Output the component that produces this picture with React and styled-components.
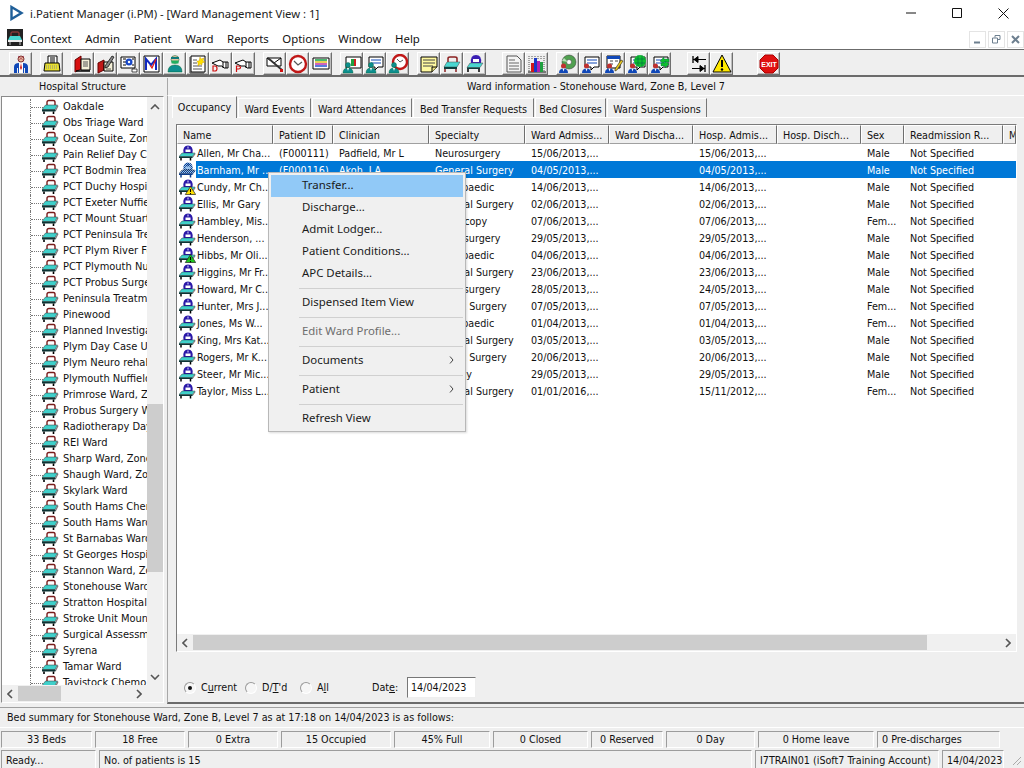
import React from 'react';
import styled, { createGlobalStyle } from 'styled-components';

const Global = createGlobalStyle`
  html, body { margin: 0; padding: 0; background: #fff; overflow: hidden; }
  * { box-sizing: border-box; }
`;
const UI = `"DejaVu Sans Condensed", "DejaVu Sans", sans-serif`;
const SEGOE = `"Noto Sans", "Open Sans", sans-serif`;

const Screen = styled.div`
  width: 1024px; height: 768px; display: flex; flex-direction: column; overflow: hidden; position: relative;
  background: #efefef; font-family: ${UI}; font-size: 10.7px; font-stretch: condensed; color: #000;
`;
const TitleBar = styled.div`
  height: 26px; background: #fff; display: flex; align-items: center; padding-left: 9px;
  font-family: ${SEGOE}; font-stretch: normal; font-size: 11.3px; color: #222;
`;
const TitleText = styled.span` margin-left: 6px; flex: 1; `;
const WinButton = styled.div` width: 46px; display: flex; justify-content: center; padding-left: 4px; `;
const MenuBar = styled.div`
  height: 23px; background: #fff; display: flex; align-items: center; padding-left: 7px;
  font-family: ${SEGOE}; font-stretch: normal; font-size: 11.4px; color: #111;
`;
const MenuItems = styled.div` display: flex; flex: 1; margin-left: 7px; padding-top: 1px; gap: 13.6px; `;
const MdiGroup = styled.div` display: flex; gap: 2px; margin-top: 4px; `;
const MdiButton = styled.div`
  width: 17px; height: 17px; border: 1px solid #e4e4e4; display: flex; align-items: center; justify-content: center;
`;
const Toolbar = styled.div`
  height: 28px; border-top: 1px solid #6b6b6b; border-bottom: 2px solid #6b6b6b; background: #efefef;
  display: flex; align-items: flex-start; padding: 2px 0 0 9px;
`;
const ToolGroup = styled.div` display: flex; margin-right: ${p => p.$gap}px; `;
const ToolButton = styled.div`
  width: 23px; height: 23px; display: flex; align-items: center; justify-content: center;
  border-top: 1px solid #fff; border-left: 1px solid #fff; border-right: 1px solid #6f6f6f; border-bottom: 1px solid #6f6f6f;
  box-shadow: inset -1px -1px 0 #bdbdbd;
`;
const Headers = styled.div` height: 19px; display: flex; padding-top: 1px; `;
const LeftHead = styled.div`
  width: 163px; margin-left: 1px; height: 17px; line-height: 18px; text-align: center; color: #111;
`;
const RightHead = styled.div`
  flex: 1; margin-left: 3px; height: 18px; line-height: 17px; text-align: center; border-left: 1px solid #a8a8a8;
  border-bottom: 1px solid #fff; color: #111;
`;
const Main = styled.div` height: 608px; display: flex; `;
const LeftPane = styled.div` width: 163px; margin-left: 1px; height: 607px; display: flex; flex-direction: column;
  border-top: 1px solid #8a8a8a; border-left: 1px solid #8a8a8a; border-right: 1px solid #fff; border-bottom: 1px solid #fff; background: #fff; `;
const LeftTop = styled.div` flex: 1; display: flex; min-height: 0; `;
const Tree = styled.div` width: 145px; overflow: hidden; padding-top: 2px; position: relative; font-size: 11px; `;
const TreeRow = styled.div`
  height: 16px; display: flex; align-items: center; white-space: nowrap; padding-left: 28px; position: relative; color: #111; line-height: 16px;
  &::before { content: ""; position: absolute; left: 28px; top: 0; bottom: 0; border-left: 1px dotted #777; }
  &::after { content: ""; position: absolute; left: 29px; top: 8px; width: 12px; border-top: 1px dotted #777; }
`;
const TreeIcon = styled.span` margin-left: 12px; margin-right: 4px; width: 17px; height: 16px; display: inline-flex; flex: none; `;
const VScroll = styled.div` width: 16px; background: #f0f0f0; display: flex; flex-direction: column; align-items: center; `;
const ScrollEnd = styled.div` height: ${p => p.$h || 17}px; width: ${p => p.$w || 16}px; display: flex; align-items: center; justify-content: center; flex: none; `;
const VThumbGap = styled.div` flex: none; height: ${p => p.$h}px; `;
const VThumb = styled.div` width: 16px; height: ${p => p.$h}px; background: #cdcdcd; flex: none; `;
const HScroll = styled.div` height: 17px; flex: none; background: #f0f0f0; display: flex; align-items: center; `;
const HThumb = styled.div` height: 15px; width: ${p => p.$w}px; background: #cdcdcd; flex: none; margin-left: ${p => p.$m || 0}px; `;
const Spacer = styled.div` flex: 1; `;
const RightPane = styled.div`
  width: 857px; margin-left: 3px; height: 608px; border-left: 1px solid #a8a8a8; border-bottom: 2px solid #6b6b6b;
  display: flex; flex-direction: column; padding-left: 4px;
`;
const Tabs = styled.div` display: flex; height: 22px; align-items: flex-end; border-bottom: 1px solid #fff; gap: 1px; `;
const Tab = styled.div`
  height: ${p => p.$active ? 22 : 19}px; width: ${p => p.$w}px; text-align: center; line-height: 22px; color: #111;
  border-top: 1px solid #fff; border-left: 1px solid #fff; border-right: 1px solid #777; white-space: nowrap;
  background: #efefef; ${p => p.$active ? 'margin-bottom: -1px; position: relative;' : ''}
`;
const ListBox = styled.div`
  width: 841px; height: 529px; margin: 6px 0 0 4px; display: flex; flex-direction: column; background: #fff;
  border-top: 1px solid #7a7a7a; border-left: 1px solid #7a7a7a; border-right: 1px solid #fff; border-bottom: 1px solid #fff;
`;
const Columns = `96px 60px 96px 96px 84px 84px 84px 84px 43px 99px 13px`;
const HeadRow = styled.div` display: grid; grid-template-columns: ${Columns}; height: 19px; background: #efefef; flex: none; `;
const HeadCell = styled.div`
  padding-left: 5px; line-height: 19px; color: #111; white-space: nowrap; overflow: hidden;
  border-top: 1px solid #fff; border-left: 1px solid #fff; border-right: 1px solid #6e6e6e; border-bottom: 1px solid #a0a0a0;
`;
const Rows = styled.div` flex: 1; min-height: 0; `;
const Row = styled.div` display: grid; grid-template-columns: ${Columns}; height: 17px; `;
const NameCell = styled.div` display: flex; align-items: center; padding-left: 2px; `;
const NameIcon = styled.span` width: 17px; height: 16px; flex: none; display: inline-flex; `;
const Label = styled.span`
  flex: 1; height: 17px; line-height: 19px; padding-left: 1px; white-space: nowrap; overflow: hidden;
  color: ${p => p.$sel ? '#fff' : '#111'}; background: ${p => p.$sel ? '#0078d7' : 'transparent'};
`;
const Cell = styled.div`
  padding-left: 6px; line-height: 19px; white-space: nowrap; overflow: hidden;
  color: ${p => p.$sel ? '#fff' : '#111'}; background: ${p => p.$sel ? '#0078d7' : 'transparent'};
`;
const FilterRow = styled.div` height: 50px; display: flex; align-items: center; padding: 21px 0 0 12px; color: #111; `;
const Radio = styled.span`
  width: 12px; height: 12px; border-radius: 50%; flex: none; margin-right: 5px; display: inline-flex; align-items: center; justify-content: center;
  border: 1px solid #9a9a9a; border-right-color: #fff; border-bottom-color: #fff; background: #f6f6f6;
  ${p => p.$on ? `&::after { content: ""; width: 4px; height: 4px; border-radius: 50%; background: #111; }` : ''}
`;
const RadioLabel = styled.span` width: ${p => p.$w}px; flex: none; `;
const DateLabel = styled.span` width: 28px; flex: none; `;
const DateInput = styled.div`
  width: 69px; height: 21px; margin-left: 7px; background: #fff; line-height: 19px; padding-left: 3px;
  border-top: 1px solid #777; border-left: 1px solid #777; border-right: 1px solid #eee; border-bottom: 1px solid #eee;
`;
const SummaryBar = styled.div`
  height: 21px; margin-top: 3px; border-top: 1px solid #a0a0a0; border-bottom: 1px solid #fff; padding-left: 7px; line-height: 20px; color: #111;
`;
const StatRow = styled.div` height: 20px; display: flex; padding: 3px 0 0 1px; gap: 3px; `;
const Sunken = styled.div`
  width: ${p => p.$w}px; height: 17px; line-height: 15px; text-align: ${p => p.$left ? 'left' : 'center'}; padding-left: ${p => p.$left ? 4 : 0}px;
  white-space: nowrap; overflow: hidden; color: #111; flex: none;
  border-top: 1px solid #9c9c9c; border-left: 1px solid #9c9c9c; border-right: 1px solid #fff; border-bottom: 1px solid #fff;
`;
const StatusRow = styled.div` height: 19px; display: flex; padding: 2px 0 0 1px; gap: 3px; position: relative; `;
const StatusCell = styled(Sunken)` height: 19px; line-height: 19px; `;
const Grip = styled.div` position: absolute; right: 2px; bottom: 1px; display: flex; `;

const ContextMenu = styled.div`
  position: absolute; left: 268px; top: 172px; width: 198px; height: 260px; background: #f0f0f0; padding: 2px;
  border: 1px solid #b8b8b8; box-shadow: 1px 1px 2px rgba(0,0,0,0.15);
  font-family: ${SEGOE}; font-stretch: normal; font-size: 11.4px; color: #1a1a1a;
`;
const MenuRow = styled.div`
  height: 22px; line-height: 20px; padding-left: 31px; position: relative;
  background: ${p => p.$hot ? '#91c9f7' : 'transparent'}; color: ${p => p.$off ? '#6d6d6d' : '#1a1a1a'};
`;
const Arrow = styled.span` position: absolute; right: 9px; top: 6px; display: flex; `;
const Sep = styled.div` height: 7px; padding: 3px 0 0 28px; &::after { content: ""; display: block; border-top: 1px solid #d0d0d0; } `;
const U = styled.span` text-decoration: underline; `;

const K = '#000';
const Bed = () => (
  <svg width="17" height="16" viewBox="0 0 17 16">
    <path d="M5 6.500V3.500Q5 1.500 7 1.500h4.500q1.500 0 1.500 2V6.500" fill="none" stroke="#7a1c1c" strokeWidth="1.400" />
    <path d="M3.500 6h12l-2.500 4.500H0z" fill="#3fd0ca" stroke="#333" strokeWidth=".5" />
    <path d="M15.500 6l1 1-2.500 5H13z" fill="#777" />
    <path d="M0 10.500h13.500v2H0z" fill="#0c3434" />
    <path d="M2 12.500v2.500M11.500 12.500v2.500" stroke={K} strokeWidth="1.600" />
  </svg>
);
const PatientBed = ({ kind, id }) => {
  const sel = kind === 'sel';
  return (
    <svg width="17" height="16" viewBox="0 0 17 16">
      <defs>
        <pattern id={id} width="2" height="2" patternUnits="userSpaceOnUse">
          <rect width="2" height="2" fill="#9cc4ec" /><rect width="1" height="1" fill="#0a3c8c" /><rect x="1" y="1" width="1" height="1" fill="#0a3c8c" />
        </pattern>
      </defs>
      <path d="M4.500 8Q3.500 .5 9 .5T13.500 8z" fill={sel ? `url(#${id})` : '#2a18a8'} />
      <rect x="6.500" y="4.500" width="5" height="2.500" fill={sel ? '#9cc4ec' : '#fff'} />
      <path d="M8.500 1.500h1v2h-1z" fill={sel ? '#0a3c8c' : '#e8e8ff'} />
      <path d="M3 8h13l-2.500 3.500H0z" fill={sel ? `url(#${id})` : '#3fd0ca'} stroke="#222" strokeWidth=".4" />
      <path d="M16 8l.5 1-2.500 3.500h-1z" fill={sel ? `url(#${id})` : '#777'} />
      <path d="M0 11.500h13.500v1.500H0z" fill={sel ? '#0a3c8c' : '#0c3434'} />
      <path d="M2 13v2.500M11.500 13v2.500" stroke={sel ? '#0a3c8c' : K} strokeWidth="1.500" />
      {(kind === 'warn' || kind === 'ok') && (
        <g>
          <path d="M11.500 7.500l5.200 8h-10.400z" fill={kind === 'warn' ? '#ffe000' : '#1ec81e'} stroke="#222" strokeWidth=".7" />
          <path d="M11.500 10v3M11.500 14v1" stroke={K} strokeWidth="1.100" />
        </g>
      )}
    </svg>
  );
};
const S = ({ children }) => <svg width="20" height="20" viewBox="0 0 20 20">{children}</svg>;
const Fig = () => (
  <g>
    <circle cx="6" cy="11" r="2.500" fill="#0e8f8f" stroke="#063" strokeWidth=".4" />
    <path d="M1 19q0-5 5-5t5 5z" fill="#0e8f8f" stroke="#063" strokeWidth=".4" />
    <path d="M5 14l1 3 1-3z" fill="#fff" />
  </g>
);
const FigBlue = () => (
  <g>
    <circle cx="5.500" cy="12" r="2.500" fill="#c03030" />
    <path d="M1 19q0-4.500 4.500-4.500T10 19z" fill="#1048b8" />
    <path d="M4.500 14.500h2l-1 3z" fill="#fff" />
  </g>
);
const Form = () => (
  <g>
    <path d="M4 3h14v10l-5 0-3 3V13H4z" fill="#fff" stroke={K} />
    <path d="M6 6h10M6 9h10" stroke="#1048b8" strokeWidth="1.200" />
  </g>
);
const ToolIcons = [
  [<S key="0"><circle cx="10" cy="5" r="3" fill="#e8c0a0" stroke="#803030" /><path d="M3 19V13q0-4 5-4h4q5 0 5 4v6h-3v-5h-1v5H7v-5H6v5z" fill="#1048b8" /><path d="M8 9h4v10H8z" fill="#fff" /><path d="M10 9l1 5-1 2-1-2z" fill="#d02020" /><path d="M7 2l6 5M13 2l-6 5" stroke="#a02040" strokeWidth=".6" /></S>],
  [<S key="1"><path d="M6 2h9v8H6z" fill="#fff" stroke={K} /><path d="M8 4h5M8 6h5M8 8h5" stroke={K} /><path d="M3 9h14l1 8H2z" fill="#e8e030" stroke={K} /><path d="M4 12h12M4 14h12" stroke="#888" strokeDasharray="1 1" /></S>],
  [
    <S key="2"><path d="M2 6l6-4v13l-6 3z" fill="#d81010" stroke="#600" /><path d="M8 5h9v11H8z" fill="#f4f0d8" stroke={K} /><path d="M10 8h5M10 10h5M10 12h5" stroke="#555" /><path d="M3 17h14" stroke={K} strokeWidth="1.500" /></S>,
    <S key="3"><path d="M2 9l6-3v10l-6 3z" fill="#c01818" stroke="#600" /><path d="M8 8h9v9H8z" fill="#f4f0d8" stroke={K} /><path d="M9 12L16 2l2 1-6 10-3 1z" fill="#888" stroke={K} strokeWidth=".7" /><path d="M10 15h5" stroke="#555" /></S>,
    <S key="4"><path d="M2 3h14v11H2z" fill="#fff" stroke={K} /><path d="M4 5h3M4 8h3M4 11h3M13 5h2M13 11h2" stroke={K} /><circle cx="10" cy="8" r="3.500" fill="#1848c8" /><circle cx="10" cy="8" r="1.200" fill="#fff" /><path d="M13 15h5v3h-5z" fill="#fff" stroke={K} strokeWidth=".7" /></S>,
    <S key="5"><path d="M2 2h15v16H2z" fill="#fff" stroke={K} /><path d="M4 16V5l5 6 5-6v11" fill="none" stroke="#1028c0" strokeWidth="2" /><path d="M8 11l2 3 4-9" fill="none" stroke="#e01818" strokeWidth="1.300" /></S>,
    <S key="6"><circle cx="10" cy="5.500" r="4" fill="#e8c0a0" stroke="#063" strokeWidth=".5" /><path d="M6 3h8v2H6z" fill="#0e7a7a" /><path d="M6.500 6.500h7v3h-7z" fill="#20b060" /><path d="M3 18q0-7 7-7t7 7z" fill="#0e8f8f" stroke="#063" strokeWidth=".5" /></S>,
    <S key="7"><path d="M3 2h14v16H3z" fill="#fff" stroke={K} /><path d="M2 3v16h14" fill="none" stroke="#333" /><path d="M5 6h4M5 9h4M5 12h9M5 15h9" stroke="#555" /><path d="M12 3l1 2 3-1-1 3 2 1-3 1v2l-2-1-2 2V9L9 7h2z" fill="#ffe000" stroke="#c09000" strokeWidth=".4" /></S>,
    <S key="8"><path d="M1 9l8-3 3 2h5v6h-4l-2-2H7z" fill="#fff" stroke={K} /><path d="M12 8v6M15 8v6" stroke={K} /><path d="M2 12v5h2q2 0 2-2.500T4 12z" fill="none" stroke="#d01010" strokeWidth="1.200" /></S>,
    <S key="9"><path d="M1 9l8-3 3 2h5v6h-4l-2-2H7z" fill="#fff" stroke={K} /><path d="M12 8v6M15 8v6" stroke={K} /><path d="M2.500 18v-6h2q2 0 2 1.500T4.500 15h-2" fill="none" stroke="#d01010" strokeWidth="1.200" /></S>,
  ],
  [
    <S key="10"><path d="M2 4h14v8H2z" fill="#fff" stroke={K} /><path d="M2 4l7 5 7-5" fill="none" stroke={K} /><path d="M3 4l14 12" stroke="#333" strokeWidth="1.800" /><path d="M15 15h3v3h-3z" fill="#d01010" /></S>,
    <S key="11"><circle cx="10" cy="10" r="8" fill="#fff" stroke="#c01818" strokeWidth="2.400" /><path d="M6 7l4 4 4-3" fill="none" stroke="#555" strokeWidth="1.200" /></S>,
    <S key="12"><path d="M2 4h16v11H2z" fill="#fff" stroke={K} /><path d="M4 6h12" stroke="#10a040" strokeWidth="1.500" /><path d="M4 8h12" stroke="#e0c020" strokeWidth="1.500" /><path d="M4 10h12" stroke="#c030a0" strokeWidth="1.500" /><path d="M4 12h12" stroke="#2050d0" strokeWidth="1.500" /></S>,
  ],
  [
    <S key="13"><path d="M4 3h15v11H4z" fill="#fff" stroke={K} /><path d="M12 5h2v7h-2z" fill="#d02020" /><path d="M9 5h3v7H9z" fill="#20a040" /><Fig /></S>,
    <S key="14"><Form /><Fig /></S>,
    <S key="15"><circle cx="12" cy="8" r="7" fill="#fff" stroke="#c01818" strokeWidth="2.400" /><path d="M9 5l3 3 3-2" fill="none" stroke="#555" /><Fig /></S>,
  ],
  [
    <S key="16"><path d="M2 3h16v10l-5 5H2z" fill="#fff9a0" stroke={K} /><path d="M4 6h12M4 9h12M4 12h10" stroke="#444" /><path d="M13 18v-5h5" fill="#e8e080" stroke={K} /></S>,
    <S key="17"><path d="M6 8V4.500Q6 3 8 3h5q2 0 2 1.500V8" fill="none" stroke="#8a2020" strokeWidth="1.500" /><path d="M5 8h13l-3 5H2z" fill="#49d6d0" stroke="#444" strokeWidth=".5" /><path d="M2 13h13v2H2z" fill="#0e3d3d" /><path d="M3 15v3M14 15v3" stroke="#8a2020" strokeWidth="1.500" /></S>,
    <S key="18"><path d="M6 9Q5 1 11 1q6 0 5 8z" fill="#3b1fb4" /><path d="M8 5h6v3H8z" fill="#fff" /><path d="M5 9h13l-3 4.500H2z" fill="#49d6d0" stroke="#444" strokeWidth=".5" /><path d="M2 13.500h13V15H2z" fill="#0e3d3d" /><path d="M3 15v3M14 15v3" stroke={K} strokeWidth="1.500" /></S>,
  ],
  [
    <S key="19"><path d="M3 2h10l4 4v12H3z" fill="#f4f4f4" stroke="#555" /><path d="M5 6h6M5 9h10M5 12h10M5 15h10" stroke="#666" /></S>,
    <S key="20"><path d="M1 18h18" stroke={K} /><path d="M2 2v16M5 2v3M8 2v3M11 2v3M14 2v3M17 2v16" stroke="#555" strokeDasharray="1 1" /><path d="M4 9h3v9H4z" fill="#d01818" /><path d="M7 4h3v14H7z" fill="#1838c8" /><path d="M10 7h3v11h-3z" fill="#b020b0" /><path d="M13 8h3v10h-3z" fill="#20a040" /></S>,
  ],
  [
    <S key="21"><circle cx="11" cy="8" r="7" fill="#50a050" stroke="#333" strokeWidth=".5" /><circle cx="11" cy="8" r="2.500" fill="#fff" stroke="#333" strokeWidth=".5" /><path d="M6 4l4 4-6-1z" fill="#b8e0b8" /><FigBlue /></S>,
    <S key="22"><Form /><FigBlue /></S>,
    <S key="23"><path d="M3 2h13v12H3z" fill="#fff" stroke={K} /><path d="M3 2h13v3H3z" fill="#1048b8" /><path d="M6 7h3M11 7h3M6 10h3" stroke="#444" /><path d="M11 15l6-9 2 1-6 9-2 1z" fill="#e8c820" stroke={K} strokeWidth=".5" /><FigBlue /></S>,
    <S key="24"><Form /><circle cx="13" cy="7" r="6" fill="#10c030" /><path d="M8 5h10M8 9h10M11 1v12M15 1v12" stroke="#064" strokeWidth=".6" /><FigBlue /></S>,
    <S key="25"><Form /><path d="M10 7l4-4v2h5v3h-5v2z" fill="#10c030" stroke="#064" strokeWidth=".4" /><path d="M19 10l-4 4v-2h-4V9h4V7z" fill="#10c030" stroke="#064" strokeWidth=".4" /><FigBlue /></S>,
  ],
  [
    <S key="26"><path d="M4 2v7M16 11v7" stroke={K} strokeWidth="1.300" /><path d="M4 5.500h13M5 5.500l4-3v6z" fill={K} stroke={K} /><path d="M3 14.500h13M15 14.500l-4-3v6z" fill={K} stroke={K} /></S>,
    <S key="27"><path d="M10 1l9 17H1z" fill="#ffe800" stroke={K} /><path d="M10 6v7" stroke={K} strokeWidth="2" /><circle cx="10" cy="15.500" r="1.200" fill={K} /></S>,
  ],
  [
    <svg key="28" width="20" height="20" viewBox="0 0 20 20"><path d="M6 1h8l5 5v8l-5 5H6l-5-5V6z" fill="#e01010" stroke="#a00" /><text x="10" y="13" textAnchor="middle" fontFamily="Liberation Sans, sans-serif" fontSize="7" fontWeight="700" fill="#fff">EXIT</text></svg>,
  ],
];
const toolGaps = [8, 8, 8, 8, 8, 16, 8, 16, 24, 0];

const wards = ['Oakdale','Obs Triage Ward','Ocean Suite, Zone A','Pain Relief Day Case','PCT Bodmin Treatment','PCT Duchy Hospital','PCT Exeter Nuffield','PCT Mount Stuart','PCT Peninsula Treatment','PCT Plym River Forest','PCT Plymouth Nuffield','PCT Probus Surgery','Peninsula Treatment','Pinewood','Planned Investigation','Plym Day Case Unit','Plym Neuro rehab','Plymouth Nuffield','Primrose Ward, Zone','Probus Surgery Ward','Radiotherapy Day Unit','REI Ward','Sharp Ward, Zone A','Shaugh Ward, Zone','Skylark Ward','South Hams Chemo','South Hams Ward','St Barnabas Ward','St Georges Hospital','Stannon Ward, Zone','Stonehouse Ward','Stratton Hospital Ward','Stroke Unit Mount','Surgical Assessment','Syrena','Tamar Ward','Tavistock Chemo'];

const columns = ['Name','Patient ID','Clinician','Specialty','Ward Admiss...','Ward Discha...','Hosp. Admis...','Hosp. Disch...','Sex','Readmission R...','M'];
const patients = [
  ['Allen, Mr Cha...','(F000111)','Padfield, Mr L','Neurosurgery','15/06/2013,...','15/06/2013,...','Male','normal'],
  ['Barnham, Mr ...','(F000116)','Akoh, LA','General Surgery','04/05/2013,...','04/05/2013,...','Male','sel'],
  ['Cundy, Mr Ch...','','','Orthopaedic','14/06/2013,...','14/06/2013,...','Male','warn'],
  ['Ellis, Mr Gary','','','General Surgery','02/06/2013,...','02/06/2013,...','Male','normal'],
  ['Hambley, Mis...','','','Endoscopy','07/06/2013,...','07/06/2013,...','Fem...','normal'],
  ['Henderson, ...','','','Neurosurgery','29/05/2013,...','29/05/2013,...','Male','normal'],
  ['Hibbs, Mr Oli...','','','Orthopaedic','04/06/2013,...','04/06/2013,...','Male','ok'],
  ['Higgins, Mr Fr...','','','General Surgery','23/06/2013,...','23/06/2013,...','Male','normal'],
  ['Howard, Mr C...','','','Neurosurgery','28/05/2013,...','24/05/2013,...','Male','normal'],
  ['Hunter, Mrs J...','','','Plastic Surgery','07/05/2013,...','07/05/2013,...','Fem...','normal'],
  ['Jones, Ms W...','','','Orthopaedic','01/04/2013,...','01/04/2013,...','Fem...','normal'],
  ['King, Mrs Kat...','','','General Surgery','03/05/2013,...','03/05/2013,...','Male','normal'],
  ['Rogers, Mr K...','','','Plastic Surgery','20/06/2013,...','20/06/2013,...','Male','normal'],
  ['Steer, Mr Mic...','','','Urology','29/05/2013,...','29/05/2013,...','Male','normal'],
  ['Taylor, Miss L...','','','General Surgery','01/01/2016,...','15/11/2012,...','Fem...','normal'],
];
const tabs = [['Occupancy',65],['Ward Events',73],['Ward Attendances',100],['Bed Transfer Requests',121],['Bed Closures',71],['Ward Suspensions',100]];
const stats = [['33 Beds',91],['18 Free',90],['0 Extra',90],['15 Occupied',110],['45% Full',96],['0 Closed',95],['0 Reserved',72],['0 Day',89],['0 Home leave',116]];

const Up = () => <svg width="10" height="6" viewBox="0 0 10 6"><path d="M1 5l4-4 4 4" fill="none" stroke="#555" strokeWidth="1.600" /></svg>;
const Down = () => <svg width="10" height="6" viewBox="0 0 10 6"><path d="M1 1l4 4 4-4" fill="none" stroke="#555" strokeWidth="1.600" /></svg>;
const Left = () => <svg width="6" height="10" viewBox="0 0 6 10"><path d="M5 1L1 5l4 4" fill="none" stroke="#555" strokeWidth="1.600" /></svg>;
const Right = () => <svg width="6" height="10" viewBox="0 0 6 10"><path d="M1 1l4 4-4 4" fill="none" stroke="#555" strokeWidth="1.600" /></svg>;
const Chevron = () => <svg width="5" height="8" viewBox="0 0 5 8"><path d="M1 .5L4 4 1 7.500" fill="none" stroke="#444" /></svg>;

export default function App() {
  return (
    <Screen>
      <Global />
      <TitleBar>
        <svg width="15" height="16" viewBox="0 0 15 16"><path d="M2.500 2l10 6-10 6z" fill="none" stroke="#1f5f99" strokeWidth="2.400" /></svg>
        <TitleText>i.Patient Manager (i.PM) - [Ward Management View : 1]</TitleText>
        <WinButton><svg width="12" height="2"><path d="M1 1h10" stroke="#111" /></svg></WinButton>
        <WinButton><svg width="11" height="11"><path d="M.5.500h9v9h-9z" fill="none" stroke="#111" /></svg></WinButton>
        <WinButton><svg width="11" height="11"><path d="M.5.500l10 10M10.500.500l-10 10" stroke="#111" /></svg></WinButton>
      </TitleBar>
      <MenuBar>
        <svg width="16" height="17" viewBox="0 0 16 17"><rect width="16" height="17" fill="#222" /><path d="M4 7V4q0-1 1-1h6q1 0 1 1v3" fill="none" stroke="#b04040" /><path d="M3 7h10l2 4H1z" fill="#49d6d0" /><path d="M1 11h14v2H1z" fill="#eee" /><path d="M3 13v3M13 13v3" stroke="#c0c0c0" /></svg>
        <MenuItems>
          {['Context','Admin','Patient','Ward','Reports','Options','Window','Help'].map(m => <span key={m}>{m}</span>)}
        </MenuItems>
        <MdiGroup>
          <MdiButton><svg width="9" height="9"><path d="M1 7.500h6" stroke="#6d7f8f" strokeWidth="2" /></svg></MdiButton>
          <MdiButton><svg width="9" height="9"><path d="M3 2.500V.5h5v4H6M.5 3h5v5h-5z" fill="none" stroke="#6d7f8f" /></svg></MdiButton>
          <MdiButton><svg width="9" height="9"><path d="M1 1l7 7M8 1L1 8" stroke="#6d7f8f" strokeWidth="2" /></svg></MdiButton>
        </MdiGroup>
      </MenuBar>
      <Toolbar>
        {ToolIcons.map((group, i) => (
          <ToolGroup key={i} $gap={toolGaps[i]}>
            {group.map((icon, j) => <ToolButton key={j}>{icon}</ToolButton>)}
          </ToolGroup>
        ))}
      </Toolbar>
      <Headers>
        <LeftHead>Hospital Structure</LeftHead>
        <RightHead>Ward information - Stonehouse Ward, Zone B, Level 7</RightHead>
      </Headers>
      <Main>
        <LeftPane>
          <LeftTop>
            <Tree>
              {wards.map(w => (
                <TreeRow key={w}><TreeIcon><Bed /></TreeIcon>{w}</TreeRow>
              ))}
            </Tree>
            <VScroll>
              <ScrollEnd $h={20}><Up /></ScrollEnd>
              <VThumbGap $h={287} />
              <VThumb $h={168} />
              <Spacer />
              <ScrollEnd><Down /></ScrollEnd>
            </VScroll>
          </LeftTop>
          <HScroll>
            <ScrollEnd><Left /></ScrollEnd>
            <HThumb $w={43} />
            <Spacer />
            <ScrollEnd><Right /></ScrollEnd>
            <ScrollEnd $w={16} />
          </HScroll>
        </LeftPane>
        <RightPane>
          <Tabs>
            {tabs.map(([t, w], i) => <Tab key={t} $w={w} $active={i === 0}>{t}</Tab>)}
          </Tabs>
          <ListBox>
            <HeadRow>{columns.map(c => <HeadCell key={c}>{c}</HeadCell>)}</HeadRow>
            <Rows>
              {patients.map((p, i) => {
                const sel = p[7] === 'sel';
                return (
                  <Row key={p[0]}>
                    <NameCell><NameIcon><PatientBed kind={p[7]} id={`dither${i}`} /></NameIcon><Label $sel={sel}>{p[0]}</Label></NameCell>
                    <Cell $sel={sel}>{p[1]}</Cell>
                    <Cell $sel={sel}>{p[2]}</Cell>
                    <Cell $sel={sel}>{p[3]}</Cell>
                    <Cell $sel={sel}>{p[4]}</Cell>
                    <Cell $sel={sel} />
                    <Cell $sel={sel}>{p[5]}</Cell>
                    <Cell $sel={sel} />
                    <Cell $sel={sel}>{p[6]}</Cell>
                    <Cell $sel={sel}>Not Specified</Cell>
                    <Cell $sel={sel} />
                  </Row>
                );
              })}
            </Rows>
            <HScroll>
              <ScrollEnd><Left /></ScrollEnd>
              <HThumb $w={734} />
              <Spacer />
              <ScrollEnd><Right /></ScrollEnd>
            </HScroll>
          </ListBox>
          <FilterRow>
            <Radio $on /><RadioLabel $w={44}>C<U>u</U>rrent</RadioLabel>
            <Radio /><RadioLabel $w={38}>D/<U>T</U>'d</RadioLabel>
            <Radio /><RadioLabel $w={55}>A<U>l</U>l</RadioLabel>
            <DateLabel>Dat<U>e</U>:</DateLabel>
            <DateInput>14/04/2023</DateInput>
          </FilterRow>
        </RightPane>
      </Main>
      <SummaryBar>Bed summary for Stonehouse Ward, Zone B, Level 7 as at 17:18 on 14/04/2023 is as follows:</SummaryBar>
      <StatRow>
        {stats.map(([t, w]) => <Sunken key={t} $w={w}>{t}</Sunken>)}
        <Sunken $w={123} $left>0 Pre-discharges</Sunken>
      </StatRow>
      <StatusRow>
        <StatusCell $w={95} $left>Ready...</StatusCell>
        <StatusCell $w={653} $left>No. of patients is 15</StatusCell>
        <StatusCell $w={184} $left>I7TRAIN01 (iSoft7 Training Account)</StatusCell>
        <StatusCell $w={62} $left>14/04/2023</StatusCell>
        <Grip><svg width="12" height="12"><path d="M11 3l-8 8M11 7l-4 4" stroke="#aaa" /></svg></Grip>
      </StatusRow>
      <ContextMenu>
        <MenuRow $hot>Transfer...</MenuRow>
        <MenuRow>Discharge...</MenuRow>
        <MenuRow>Admit Lodger...</MenuRow>
        <MenuRow>Patient Conditions...</MenuRow>
        <MenuRow>APC Details...</MenuRow>
        <Sep />
        <MenuRow>Dispensed Item View</MenuRow>
        <Sep />
        <MenuRow $off>Edit Ward Profile...</MenuRow>
        <Sep />
        <MenuRow>Documents<Arrow><Chevron /></Arrow></MenuRow>
        <Sep />
        <MenuRow>Patient<Arrow><Chevron /></Arrow></MenuRow>
        <Sep />
        <MenuRow>Refresh View</MenuRow>
      </ContextMenu>
    </Screen>
  );
}
